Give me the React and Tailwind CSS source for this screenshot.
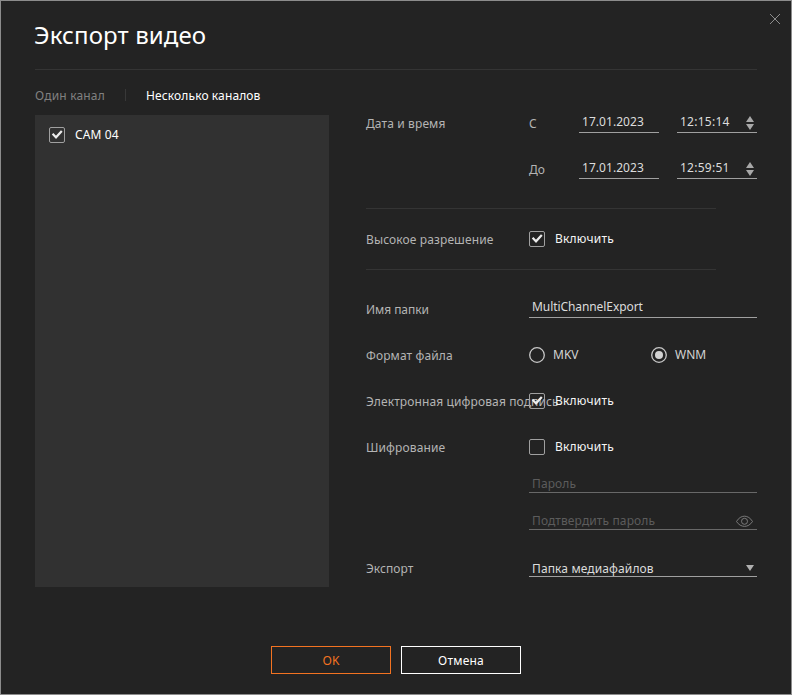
import React from "react";

function Checkbox({ checked }) {
  return (
    <svg width="16" height="16" viewBox="0 0 16 16" fill="none" className="shrink-0">
      <rect x="0.5" y="0.5" width="15" height="15" rx="1.5" stroke="#a0a0a0" />
      {checked && <path d="M3.6 6.8L7 10.3L12.8 4" stroke="#ececec" strokeWidth="2.2" />}
    </svg>
  );
}

function Radio({ checked, label }) {
  return (
    <div className="flex w-[122px] shrink-0 items-center gap-2">
      <svg width="16" height="16" viewBox="0 0 16 16" fill="none" className="shrink-0">
        <circle cx="8" cy="8" r="7.3" stroke="#c8c8c8" strokeWidth="1.3" />
        {checked && <circle cx="8" cy="8" r="4" fill="#d2d2d2" />}
      </svg>
      <span className="-mt-px tracking-normal text-[#d2d2d2]">{label}</span>
    </div>
  );
}

function Row({ label, children }) {
  return (
    <div className="flex h-[46px] items-center">
      <div className="w-[163px] shrink-0 whitespace-nowrap pt-px text-[#b4b4b4]">{label}</div>
      {children}
    </div>
  );
}

function Enable({ checked }) {
  return (
    <div className="flex items-center gap-2.5">
      <Checkbox checked={checked} />
      <span className="-mt-px tracking-[0.2px] text-[#f5f5f5]">Включить</span>
    </div>
  );
}

function DateTime({ name, date, time }) {
  return (
    <>
      <div className="w-[50px] pt-px text-[#b4b4b4]">{name}</div>
      <div className="mr-[18px] mt-[-3px] h-[23px] w-20 border-b border-[#a0a0a0] pl-[3px] pt-[3px] tracking-[0.05px] text-[#dcdcdc]">{date}</div>
      <div className="mt-[-3px] flex h-[23px] w-20 justify-between border-b border-[#a0a0a0] pl-[3px] pr-[3px] pt-[3px] text-[#dcdcdc]">
        <span className="tracking-[0.25px]">{time}</span>
        <svg width="8" height="14" viewBox="0 0 8 14" fill="#a8a8a8" className="mt-[3px]">
          <path d="M4 0L8 6H0Z" />
          <path d="M0 8H8L4 14Z" />
        </svg>
      </div>
    </>
  );
}

export default function App() {
  return (
    <div className="flex h-[695px] w-[792px] flex-col border border-[#8c8c8c] bg-[#232323] px-[34px] font-['Noto_Sans',sans-serif] text-[12px] leading-[18px] tracking-[0.12px]">
      <header className="flex h-[69px] shrink-0 justify-between border-b border-[#343434]">
        <h1 className="-ml-px pt-[18px] text-[24px] leading-[32px] text-white">Экспорт видео</h1>
        <svg width="10" height="10" viewBox="0 0 10 10" className="-mr-[23px] mt-[13px]" stroke="#999999" strokeWidth="0.9">
          <path d="M0 0L10 10M10 0L0 10" />
        </svg>
      </header>

      <div className="flex">
        <section className="w-[294px] shrink-0">
          <nav className="flex h-[45px] items-center pt-[6px]">
            <span className="w-[90px] tracking-[0.18px] text-[#808080]">Один канал</span>
            <span className="-mt-0.5 h-3 w-px bg-[#383838]" />
            <span className="ml-5 text-white">Несколько каналов</span>
          </nav>
          <div className="h-[472px] bg-[#313131] pl-[14px] pt-[11px]">
            <div className="flex items-center gap-2.5">
              <Checkbox checked />
              <span className="text-white">CAM 04</span>
            </div>
          </div>
        </section>

        <section className="ml-[37px] w-[391px] pt-[30px]">
          <Row label="Дата и время">
            <DateTime name="С" date="17.01.2023" time="12:15:14" />
          </Row>
          <Row label="">
            <DateTime name="До" date="17.01.2023" time="12:59:51" />
          </Row>
          <div className="mb-[7px] mt-4 h-px w-[350px] bg-[#343434]" />
          <Row label="Высокое разрешение"><Enable checked /></Row>
          <div className="mb-4 mt-[7px] h-px w-[350px] bg-[#343434]" />
          <Row label={<span className="tracking-[-0.05px]">Имя папки</span>}>
            <div className="mt-[-5px] h-[23px] w-[228px] border-b border-[#a0a0a0] pl-[3px] pt-[3px] tracking-[-0.08px] text-[#dcdcdc]">MultiChannelExport</div>
          </Row>
          <Row label="Формат файла">
            <Radio label="MKV" />
            <Radio label="WNM" checked />
          </Row>
          <Row label="Электронная цифровая подпись"><Enable checked /></Row>
          <Row label="Шифрование"><Enable /></Row>
          <div className="ml-[163px] h-[23px] border-b border-[#686868] pl-[3px] pt-[5px] text-[#5c5c5c]">Пароль</div>
          <div className="ml-[163px] mt-[14px] flex h-[23px] justify-between border-b border-[#686868] pl-[3px] pr-1 pt-[5px] text-[#5c5c5c]">
            <span>Подтвердить пароль</span>
            <svg width="17" height="12" viewBox="0 0 17 12" fill="none" stroke="#828282" strokeWidth="0.9" className="mt-[3px]">
              <path d="M0.5 6.5C4.6 -0.6 12.4 -0.6 16.5 6.5C12.4 13 4.6 13 0.5 6.5Z" />
              <circle cx="8.5" cy="6.3" r="3" />
            </svg>
          </div>
          <div className="mt-[22px] flex">
            <div className="w-[163px] pt-[8px] tracking-[0.05px] text-[#b4b4b4]">Экспорт</div>
            <div className="flex h-[25px] w-[228px] justify-between border-b border-[#a0a0a0] pl-[3px] pr-[3px] pt-[8px] text-[#dcdcdc]">
              <span>Папка медиафайлов</span>
              <svg width="8" height="6" viewBox="0 0 8 6" fill="#b0b0b0" className="mt-[5px]">
                <path d="M0 0H8L4 6Z" />
              </svg>
            </div>
          </div>
        </section>
      </div>

      <footer className="mt-[59px] flex justify-center gap-2.5">
        <button className="h-7 w-[120px] border border-[#f37321] pt-px text-[#f37321]">OK</button>
        <button className="h-7 w-[120px] border border-white pt-px tracking-[0.2px] text-white">Отмена</button>
      </footer>
    </div>
  );
}
